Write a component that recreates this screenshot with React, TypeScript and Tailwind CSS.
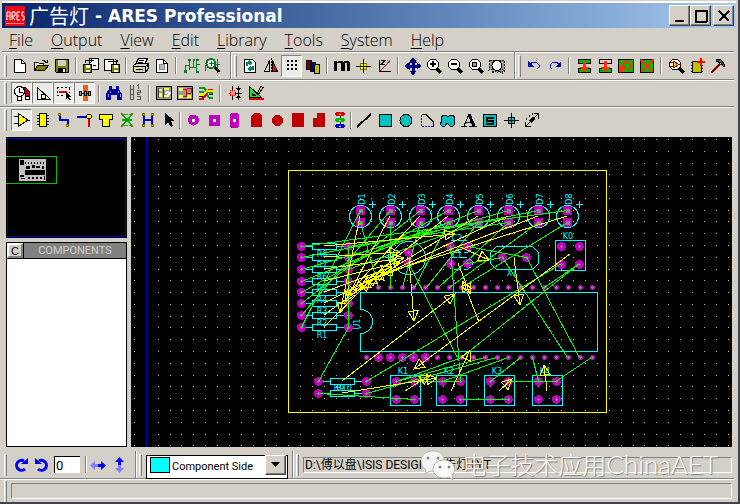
import type { ReactNode } from "react";

type Children = { children?: ReactNode };

/* ---------- drawing helpers ---------- */

function Glyph({ children }: Children) {
  return (
    <svg viewBox="0 0 20 20" className="h-5 w-5 shrink-0" fill="none" stroke="#000" shapeRendering="crispEdges" aria-hidden="true">
      {children}
    </svg>
  );
}

function Lens({ mark = "" }: { mark?: string }) {
  return (
    <g>
      <path d="M12 12l5 5" strokeWidth="3" />
      <circle cx="9" cy="8.500" r="5.500" fill="#fff" />
      <path d={mark} strokeWidth="2" />
    </g>
  );
}

const icons: Record<string, ReactNode> = {
  New: <><path d="M4.500 3.500h7l4 4v9h-11z" fill="#fff" /><path d="M11.500 3.500v4h4" /></>,
  Open: <><path d="M3.5 14V6.500h4l1 1h4v2" fill="#ffff80" /><path d="M3.500 14.500l3-5h11l-4 5z" fill="#808000" /><path d="M11 4.500h2l2 2M16.500 3.500v3h-3" /></>,
  Save: <><path d="M3.500 3.500h13v13h-12l-1-1z" fill="#808000" /><path d="M6 4h8v6H6z" fill="#d4d0c8" stroke="none" /><path d="M6 12h8v4H6z" fill="#000" stroke="none" /><path d="M11 13h2v3h-2z" fill="#fff" stroke="none" /></>,
  "Import region": <><path d="M8.500 2.500h9v11h-9z" fill="#fff" /><path d="M2.500 8.500h8v8h-8z" fill="#808000" /><path d="M5 9h4v3H5zM5 14h4v2H5z" fill="#fff" stroke="none" /><path d="M4.500 6.500v-2h6M9 2.500l3 2-3 2M12 9.500h3" /></>,
  "Export region": <><path d="M2.500 3.500h9v11h-9z" fill="#fff" /><path d="M9.500 8.500h8v8h-8z" fill="#808000" /><path d="M12 9h4v3h-4zM12 14h4v2h-4z" fill="#fff" stroke="none" /><path d="M6 5.500h9M13 3l3 2.500M14.500 6v3" /></>,
  Print: <><path d="M7.500 2.500h9l-3 6h-9z" fill="#fff" /><path d="M2.500 9.500l3-2h12v5l-3 4h-11l-1-2z" fill="#d4d0c8" /><path d="M3 10.500h11v5M5 13.500h7M8 4.500h5M7 6.500h5" /><path d="M5 12.500h3" stroke="#ff0" /><path d="M15.500 9l2 1" strokeWidth="2" /></>,
  "Set area": <><path d="M4.500 3.500h7l4 4v9h-11z" fill="#fff" /><path d="M7 8h5v5H7z" fill="#bbb" stroke="#888" /><path d="M11.500 3.500v4h4" /></>,
  Netlist: <g stroke="#007f1f"><path d="M4.500 15v-6h4v-5M8.500 8v6M8.500 11.500h7M15.500 4v12M12.500 4v7M15.500 8h3" /><path d="M3 14h3v3H3zM7 3h3v2H7zM12 3h2v2h-2zM15 3h3v2h-3zM15 15h3v2h-3z" fill="#007f1f" stroke="none" /></g>,
  "Search netlist": <><path d="M3.500 15v-6h4V4M15.500 3v12M12 8h6" stroke="#007f1f" /><path d="M12 10l5 6" strokeWidth="3" /><circle cx="9" cy="7.500" r="4.500" fill="#fff" stroke="#007f1f" strokeWidth="2" /><path d="M7 7.500h5M9.500 5v5" stroke="#007f1f" /></>,
  Redraw: <><path d="M4.500 3.500h8l3 3v10h-11z" fill="#fff" /><path d="M7 10V7h4M9 5l2 2-2 2M13 10v3h-4M11 11l-2 2 2 2" stroke="#008060" strokeWidth="1.500" /></>,
  Flip: <><path d="M8.500 4.500v11h-5z" fill="#d4d0c8" /><path d="M11.500 4.500v11h5z" fill="#f00" /><path d="M10 2v15" strokeDasharray="2 1" /></>,
  Grid: <path d="M5 5h2M9 5h2M13 5h2M5 9h2M9 9h2M13 9h2M5 13h2M9 13h2M13 13h2" strokeWidth="2" />,
  Layers: <><path d="M3.500 4.500h5v9h-5z" fill="#800000" /><path d="M7.500 6.500h5v9h-5z" fill="#000080" /><path d="M11.500 8.500h5v9h-5z" fill="#c0c000" /></>,
  Metric: <path d="M2 15V5h3v1l2-1h3l1 1 2-1h3l2 2v8h-3V7h-2v8H9V7H5v8z" fill="#000" stroke="none" />,
  Origin: <><path d="M7.500 7.500h6v6h-6z" fill="#ff0" stroke="#770" /><path d="M3 10.500h15M10.500 3v14" /></>,
  Polar: <><path d="M5.500 4v12M5 15.500h12M7 4.500h4l-4 4h4" /><path d="M6 15L16 5" stroke="#c00" /><path d="M13 4l3 3M16 4l-3 3" stroke="#777" /></>,
  Pan: <path d="M10 2l3 4h-2v3h3V7l4 3-4 3v-2h-3v4h2l-3 4-3-4h2v-4H6v2l-4-3 4-3v2h3V6H7z" fill="#0000b0" stroke="#000060" />,
  "Zoom in": <Lens mark="M6 8h6M9 5v6" />,
  "Zoom out": <Lens mark="M6 8h6" />,
  "Zoom all": <><Lens /><path d="M6.500 6.500h4v4h-4z" fill="#999" /></>,
  "Zoom area": <><path d="M3 4h14v11l-2-2v4l-3-2-2 2-2-2-3 2v-4l-3 1z" fill="#999" stroke="#222" strokeDasharray="2 1" /><circle cx="10" cy="9.500" r="5" fill="#fff" /></>,
  Undo: <g stroke="#0000b0"><path d="M6 8l3-2h3l3 3v2l-2 2" /><path d="M4 5v6h6z" fill="#0000b0" stroke="none" /></g>,
  Redo: <g stroke="#0000b0"><path d="M14 8l-3-2H8L5 9v2l2 2" /><path d="M16 5v6h-6z" fill="#0000b0" stroke="none" /></g>,
  "Block copy": <><path d="M4.500 3.500h12v4h-12zM4.500 12.500h12v4h-12z" fill="#0b0" /><path d="M9 5h3v6h3l-4.500 5L6 11h3z" fill="#ff3010" stroke="none" /></>,
  "Block move": <><path d="M4.500 3.500h12v4h-12z" /><path d="M4.500 12.500h12v4h-12z" fill="#0b0" /><path d="M9 5h3v6h3l-4.500 5L6 11h3z" fill="#ff3010" stroke="none" /></>,
  "Block rotate": <><path d="M2.500 3.500h15v13h-15z" fill="#0b0" /><path d="M7 11V8l2-2h3l2 2v4l-3 3" stroke="#ff3010" strokeWidth="2" /><path d="M4 10h6v2l-4 4H4z" fill="#ff3010" stroke="none" /></>,
  "Block delete": <><path d="M3.500 3.500h13v13h-13z" fill="#0b0" /><path d="M4 4l12 12M16 4L4 16" stroke="#ff3010" strokeWidth="2" /></>,
  "Pick parts": <><path d="M13 12l5 5" strokeWidth="3" /><circle cx="9" cy="8.500" r="5.500" fill="#fff" /><path d="M7 5l6 3.500-6 3.500z" fill="#cc0" stroke="#900" /><path d="M3 6.500h4M3 10.500h4M13 8.500h2" stroke="#900" /></>,
  "Make package": <><path d="M4 6.500h12M4 9.500h12M4 12.500h12M4 15.500h12" /><path d="M5.500 5.500h9v11h-9z" fill="#c0c000" /><path d="M10 6h8M14 2v8" stroke="#f00" strokeWidth="2" /></>,
  Decompose: <><path d="M3 17L12 8" stroke="#800000" strokeWidth="2" /><path d="M8 3l5 1 4 5-1 2-3-4-5-2z" fill="#606000" /></>,

  "Trace angle lock": <><path d="M4 12V7l3-3h6l4 4v8h-4v-6l-2-2" fill="#c00010" /><path d="M13.500 13.500h4v3h-4z" fill="#fff" /><circle cx="7.500" cy="8.500" r="5" fill="#fff" /><path d="M7.500 5v4h3" /><path d="M5 14v3h4v-3" fill="#fff" /></>,
  "Auto neck": <><path d="M4.500 4v12M4 16.500h14M5 5l12 11" /><path d="M8.500 11.500h4v4h-4z" fill="#ff8" /></>,
  "Auto trace": <><path d="M3 4.500h13M3 12.500h8M3.500 4v9M15.500 5v5" strokeDasharray="2 2" /><path d="M5 8.500h8" stroke="#e00" strokeWidth="2" /><path d="M12 9l6 5-3 0 2 3-2 0-1-2-2 1z" fill="#000" stroke="none" /></>,
  "Auto track": <><path d="M8 2h5v16H8z" fill="#f06010" stroke="none" /><path d="M4 10.500h12" /><path d="M4.500 8.500h2v4h-2zM13.500 8.500h2v4h-2zM9.500 8.500h2v4h-2z" fill="#999" /></>,
  Find: <><path d="M5 3h3v3h4V3h3v3l3 5v6h-5v-5H7v5H2v-6l3-5z" fill="#0000a0" stroke="none" /><path d="M4 11v3M6 8v2M14 8v2M16 11v3" stroke="#99f" /></>,
  "Auto annotate": <path d="M5.500 2v4h3V2M5.500 7v4h3V7M5.500 12v4h3v-4M13.500 1v5M12 2.500h1M12 7.500h3v2h-3v2h3M12 13.500h3v3h-3" stroke="#555" />,
  "Auto placer": <><path d="M2.500 3.500h15v13h-15z" fill="#999" /><path d="M5 6h3v2H5zM5 10h3v4H5zM10 5h5v2h-5zM10 12h5v2h-5z" fill="#ff4" stroke="none" /><path d="M4.500 5v10M9.500 5v10" stroke="#333" /><path d="M11 10l3-1 2 1-3 3" stroke="#fff" strokeWidth="2" /></>,
  "Auto router": <><path d="M2.500 3.500h15v13h-15z" fill="#999" /><path d="M4 5h4v3H4zM12 12h4v3h-4zM4 12h4v3H4z" fill="#ff4" stroke="none" /><path d="M8 6.500h3v4h5M8 13.500h3v-3M12 5.500h4v4" stroke="#d00" /></>,
  "Design rules": <><path d="M3 4.500h4l6 5h4M3 8.500h5l5 6h4" stroke="#00a020" strokeWidth="2" /><path d="M3 15.500h4l6-9h4" stroke="#d00" strokeWidth="2" /><path d="M3 11.500h4l5-4h5" stroke="#ee0" strokeWidth="2" /><path d="M3 13.500h4M13 11.500h4" /></>,
  "Connectivity check": <><path d="M7.500 3v14M13.500 3v14M4 10.500h13" /><path d="M5 7.500h5v5H5z" fill="#f88" stroke="#d00" strokeDasharray="1 1" /><path d="M11 5h5l-2.500 3zM11 15h5l-2.500-3z" fill="#000" stroke="none" /></>,
  "3D view": <><path d="M3.500 3.500v11h12z" fill="#2d2" /><path d="M6.500 10.500v2h3z" fill="#fff" /><path d="M3 16h15" stroke="#d00" strokeWidth="2" /><path d="M11 10.500l4-7 2 1-4 6z" fill="#ee0" /></>,

  Component: <><path d="M6.500 3.500L16 10 6.500 16.500z" fill="#ff0" /><path d="M2 6.500h4M2 13.500h4M16 10.500h2" /></>,
  Package: <><path d="M4 5.500h12M4 8.500h12M4 11.500h12M4 14.500h12" /><path d="M6.500 3.500h7v13h-7z" fill="#ff0" /></>,
  Track: <><path d="M5.500 5v5h8v5" stroke="#0000c0" strokeWidth="2" /><path d="M4.500 3.500h2v2h-2zM12.500 14.500h2v2h-2z" fill="#ff0" stroke="#770" /></>,
  Via: <><path d="M2 7h10" stroke="#0000b0" strokeWidth="2" /><path d="M14 9v8" stroke="#d00" strokeWidth="2" /><circle cx="14" cy="6.500" r="2.500" fill="#ff0" /></>,
  Zone: <path d="M3.500 4.500h13v5h-3v7h-7v-7h-3z" fill="#ff0" />,
  Ratsnest: <><path d="M6 5l8 10M14 5L6 15M5 10h10" stroke="#0a0" strokeWidth="1.500" /><path d="M6 4.500h8M6 15.500h8" stroke="#0a0" strokeDasharray="2 1" /><path d="M4 3h2v2H4zM14 3h2v2h-2zM4 15h2v2H4zM14 15h2v2h-2z" fill="#770" stroke="none" /></>,
  Connectivity: <><path d="M6 5v10M14 5v10M6 10h8" stroke="#0000b0" strokeWidth="2" /><path d="M4.500 3.500h2v2h-2zM13.500 3.500h2v2h-2zM4.500 14.500h2v2h-2zM13.500 14.500h2v2h-2z" fill="#ff0" stroke="#770" /></>,
  Select: <path d="M6 3v12l3-3 3 5 2-1-2-5h4z" fill="#000" stroke="none" />,
  "Round pad": <><circle cx="10.500" cy="10" r="5.500" fill="#c000c0" stroke="none" /><path d="M9 9h3v3H9z" fill="#fff" stroke="none" /></>,
  "Square pad": <><path d="M5 5h11v11H5z" fill="#c000c0" stroke="none" /><path d="M9 9h3v3H9z" fill="#fff" stroke="none" /></>,
  "DIL pad": <><rect x="5" y="3" width="9" height="15" rx="3" fill="#c000c0" stroke="none" /><path d="M8 9h3v3H8z" fill="#fff" stroke="none" /></>,
  "Edge pad": <path d="M5 17V6l3-3h5l3 3v11z" fill="#c00000" stroke="none" />,
  "Circular SMT": <circle cx="10.500" cy="10.500" r="5.500" fill="#c00000" stroke="none" />,
  "Rectangular SMT": <path d="M4 3h12v14H4z" fill="#c00000" stroke="none" />,
  "Polygon SMT": <path d="M4 8h4V3h8v14H4z" fill="#c00000" stroke="none" />,
  Padstack: <><path d="M10 3v14" /><ellipse cx="10" cy="4" rx="5" ry="2" fill="#d00" stroke="none" /><ellipse cx="10" cy="10" rx="5" ry="2" fill="#0b0" stroke="none" /><ellipse cx="10" cy="16" rx="5" ry="2" fill="#00c" stroke="none" /><path d="M9 4.500h2M9 10.500h2M9 16.500h2" stroke="#fff" /></>,
  Line: <path d="M3 17L17 4" strokeWidth="2" />,
  Box: <path d="M4.500 4.500h12v12h-12z" fill="#00c0c0" />,
  Circle: <circle cx="10" cy="10.500" r="6" fill="#00c0c0" />,
  Arc: <><path d="M5 4.500h4l7 7v5" /><path d="M4.500 5v11.500H16" stroke="#0000b0" strokeDasharray="2 1" /></>,
  Path: <path d="M3 8l2-3h3l2 2 2-2h3l2 3-1 3 1 3-2 2h-3l-3-3-2 3H4l-2-2 2-3z" fill="#00c0c0" />,
  Text: <><path d="M2 16.500h6M10 16.500h8M5 16L10 4M7 12.500h6" /><path d="M10 4l5 12" strokeWidth="3" /></>,
  Symbol: <><path d="M3.500 4.500h13v12h-13z" fill="#00c0c0" /><path d="M14 7.500H7v3h6v3H6" strokeWidth="2" /></>,
  Marker: <><path d="M7.500 7.500h6v6h-6z" fill="#00c0c0" /><path d="M3 10.500h15M10.500 3v15" /></>,
  Dimension: <><path d="M3 17L17 3M3.500 12v4.500h5M12 3.500h4.500v5" /><path d="M8 12l4-4" strokeWidth="3" /><path d="M4 9h1M7 6h1M10 4h1" strokeWidth="2" /></>,
};

function Tool({ name, on = false }: { name: string; on?: boolean }) {
  const face = on ? "border border-t-[#808080] border-l-[#808080] border-r-white border-b-white bg-[#ecebe7]" : "";
  return (
    <button type="button" title={name} aria-label={name} aria-pressed={on} className={`flex h-[22px] w-[21px] shrink-0 items-center justify-center ${face}`}>
      <Glyph>{icons[name]}</Glyph>
    </button>
  );
}

function Tools({ names, on = [] }: { names: string[]; on?: string[] }) {
  return (
    <div className="flex shrink-0">
      {names.map((n) => <Tool key={n} name={n} on={on.includes(n)} />)}
    </div>
  );
}

const Grip = () => <span className="h-[22px] w-[3px] shrink-0 border-t border-r border-l border-t-white border-l-white border-r-[#808080]" />;
const Sep = () => <span className="h-[17px] w-[2px] shrink-0 border-l border-l-[#808080] bg-white" />;
const BandEdge = () => <span className="w-[2px] shrink-0 self-stretch border-l border-l-[#808080] bg-white" />;

function Gap({ children }: Children) {
  return <span className="flex w-2 shrink-0 items-center justify-center">{children}</span>;
}

const row = "flex shrink-0 items-center border-t border-t-[#808080] shadow-[inset_0_1px_0_#fff] pl-1";

/* ---------- circuit board ---------- */

const MAGENTA = "#c000c0";
const CYAN = "#00ffff";
const ledX = [360, 390, 420, 448, 478, 508, 538, 567];
const resistorY = [246, 257, 269, 281, 292, 303, 315, 327];
const pinX = Array.from({ length: 20 }, (_, i) => Math.round(366 + i * 11.87));
const switches: [string, number, number][] = [["K1", 390, 375], ["K2", 436, 375], ["K3", 484, 375], ["K4", 532, 375], ["K0", 555, 240]];

const nets = [
  [348, 246, 348, 327], [348, 327, 318, 381], [318, 393, 414, 399], [366, 381, 561, 263], [579, 263, 461, 357],
  [460, 381, 450, 246], [502, 257, 567, 357], [526, 257, 579, 357], [408, 263, 457, 357], [532, 357, 538, 381],
  [591, 357, 555, 381], [508, 381, 555, 381], [460, 399, 508, 399], [520, 357, 490, 381], [508, 357, 442, 381],
  [496, 357, 366, 393], [461, 357, 396, 381], [484, 357, 396, 381], [414, 381, 460, 381], [467, 246, 526, 257], [467, 263, 502, 257],
  [301, 246, 567, 210], [301, 257, 538, 210], [301, 269, 508, 210], [301, 281, 478, 210], [301, 292, 448, 210],
  [301, 303, 420, 210], [301, 315, 390, 210], [301, 327, 360, 210], [360, 222, 378, 287], [390, 222, 390, 287],
  [420, 222, 402, 287], [448, 222, 414, 287], [478, 222, 426, 287], [508, 222, 438, 287], [538, 222, 449, 287],
  [567, 222, 461, 287], [348, 257, 448, 222], [348, 246, 508, 222], [348, 269, 478, 222], [579, 263, 544, 287],
];

const vectors = [
  [360, 216, 340, 313], [390, 216, 345, 302], [420, 216, 346, 296], [448, 216, 354, 291], [478, 216, 360, 288],
  [508, 216, 366, 283], [538, 216, 373, 279], [567, 216, 382, 274], [324, 246, 455, 234], [324, 257, 400, 252],
  [324, 269, 404, 258], [324, 281, 400, 262], [324, 292, 392, 267], [324, 303, 386, 272], [324, 315, 378, 276],
  [324, 327, 370, 281], [409, 258, 414, 321], [514, 258, 520, 305], [570, 254, 414, 369], [479, 322, 463, 281],
  [458, 263, 470, 294], [458, 246, 489, 260], [342, 381, 455, 294], [342, 393, 437, 378], [405, 391, 430, 375],
  [451, 391, 470, 350], [499, 391, 512, 379], [547, 391, 544, 365],
];

function arrowHead([x1, y1, x2, y2]: number[]) {
  const len = Math.hypot(x2 - x1, y2 - y1);
  const ux = (x2 - x1) / len;
  const uy = (y2 - y1) / len;
  const bx = x2 - ux * 10;
  const by = y2 - uy * 10;
  return `M${x2} ${y2}L${bx - uy * 5} ${by + ux * 5}L${bx + uy * 5} ${by - ux * 5}Z`;
}

function dots() {
  let d = "";
  for (let i = 0; i < 160; i++) {
    if (i === 1) continue;
    for (let j = 0; j < 90; j++) d += `M${134 + Math.round(i * 11.87)} ${139 + Math.round(j * 11.78)}h1v1h-1z`;
  }
  return d;
}
const dotPath = dots();

function Pad({ x, y, r = 4 }: { x: number; y: number; r?: number }) {
  return (
    <>
      <circle cx={x + 0.5} cy={y + 0.5} r={r + 0.5} fill={MAGENTA} />
      <path d={`M${x - 1} ${y}h3v1h-3zM${x} ${y - 1}h1v3h-1z`} fill="#888" />
    </>
  );
}

const labelFont = "font-['DejaVu_Sans',Verdana,sans-serif] text-[8px]";

function Label({ x, y, children, up = false }: { x: number; y: number; up?: boolean; children: string }) {
  return (
    <text x={x} y={y} textAnchor="middle" fill={CYAN} className={labelFont} transform={up ? `rotate(-90 ${x} ${y})` : undefined}>
      {children}
    </text>
  );
}

function Board() {
  return (
    <svg className="absolute inset-0 h-full w-full" shapeRendering="crispEdges" role="img" aria-label="PCB layout">
      <g transform="translate(-131 -137)">
        <path d={dotPath} fill="#bdbdbd" />
        <path d="M146 137h1v2000h-1z" fill="#0000c8" />
        <rect x="288.5" y="170.5" width="318" height="242" fill="none" stroke="#ff0" />

        <g fill="none" stroke={CYAN}>
          {ledX.map((x) => (
            <path key={x} d={`M${x - 10.5} 216.500a11 11 0 0 0 22 0a11 11 0 0 0 -22 0M${x + 9} 204.500h7M${x + 12.5} 201v7`} />
          ))}
          {resistorY.map((y) => (
            <path key={y} d={`M305 ${y + 0.5}h7M337 ${y + 0.5}h8M312.500 ${y - 2.5}h24v6h-24z`} />
          ))}
          {[381, 393].map((y) => (
            <path key={y} d={`M322 ${y + 0.5}h8M355 ${y + 0.5}h8M330.500 ${y - 2.5}h24v6h-24z`} />
          ))}
          {switches.map(([n, x, y]) => <rect key={n} x={x + 0.5} y={y + 0.5} width="30" height="30" />)}
          <path d="M360.500 292.500h237v59h-237v-18a12 12 0 0 0 0 -24z" />
          <circle cx="409" cy="258" r="16.500" />
          <path d="M385 257.500h7M388.500 254v7" />
          <path d="M496.500 246.500h36l6 6v11l-6 6h-36l-6-6v-11z" />
          <path d="M447 249v-5l4-4h16l5 4v5l-4 3h-16zM447 266v-5l4-4h16l5 4v5l-4 3h-16z" strokeDasharray="7 3" />
        </g>

        {ledX.map((x) => (
          <g key={x}>
            <path d={`M${x - 4} 206h9v9h-9zM${x - 4} 218h9v9h-9z`} fill={MAGENTA} />
            <path d={`M${x - 1} 209h4v4h-4zM${x - 1} 221h4v4h-4z`} fill="#888" />
          </g>
        ))}
        {resistorY.map((y) => <g key={y}><Pad x={301} y={y} /><Pad x={348} y={y} /></g>)}
        {[381, 393].map((y) => <g key={y}><Pad x={318} y={y} /><Pad x={366} y={y} /></g>)}
        {switches.map(([n, x, y]) => (
          <g key={n}>
            <Pad x={x + 6} y={y + 6} /><Pad x={x + 24} y={y + 6} />
            <Pad x={x + 6} y={y + 24} /><Pad x={x + 24} y={y + 24} />
          </g>
        ))}
        {pinX.map((x, i) => (
          <g key={x}>
            <Pad x={x} y={287} r={2} />
            <Pad x={x} y={357} r={i > 0 && i < 6 ? 4 : 2} />
          </g>
        ))}
        <Pad x={408} y={252} /><Pad x={408} y={263} />
        <Pad x={502} y={257} /><Pad x={526} y={257} />
        <Pad x={450} y={246} /><Pad x={467} y={246} /><Pad x={450} y={263} /><Pad x={467} y={263} />

        {ledX.map((x, i) => <Label key={x} x={x + 5} y={199} up>{`D${i + 1}`}</Label>)}
        {resistorY.map((y, i) => <Label key={y} x={322} y={y + 11}>{`R${8 - i}`}</Label>)}
        {switches.map(([n, x, y]) => <Label key={n} x={x + 13} y={y - 1}>{n}</Label>)}
        <Label x={344} y={391}>R10</Label>
        <Label x={339} y={391}>R9</Label>
        <Label x={512} y={276}>X1</Label>
        <Label x={457} y={258}>C1</Label>
        <Label x={457} y={241}>C2</Label>
        <Label x={360} y={324} up>U1</Label>

        <path d={nets.map(([a, b, c, d]) => `M${a + 0.5} ${b + 0.5}L${c + 0.5} ${d + 0.5}`).join("")} stroke="#0f0" fill="none" />
        <path d={vectors.map((v) => `M${v[0]} ${v[1]}L${v[2]} ${v[3]}${arrowHead(v)}`).join("")} stroke="#ff0" fill="none" />
      </g>
    </svg>
  );
}

function Overview() {
  return (
    <svg className="block h-[101px] w-full bg-black" shapeRendering="crispEdges" role="img" aria-label="Overview">
      <rect x="1.500" y="1.500" width="118" height="98" fill="none" stroke="#0000c8" />
      <path d="M0 19.500h50.500v27H0" fill="none" stroke="#00c000" />
      <path d="M13 22h27v22H13z" fill="#c0c0c0" />
      <path d="M14 23h4v5h-4zM19 33h20v5H19zM14 38h4v2h-4zM19 25h1v2h-1zM22 25h1v2h-1zM25 25h1v2h-1zM28 25h1v2h-1zM31 25h1v2h-1zM34 25h1v2h-1zM37 25h1v2h-1zM20 29h4v3h-4zM26 28h3v3h-3zM30 29h4v2h-4zM36 29h2v3h-2zM15 41h4v1h-4zM22 40h2v2h-2zM26 40h2v2h-2zM30 40h2v2h-2zM34 40h2v2h-2zM38 39h1v4h-1z" fill="#000" />
    </svg>
  );
}

/* ---------- window ---------- */

const raised = "border border-t-white border-l-white border-r-[#404040] border-b-[#404040] bg-[#d4d0c8] shadow-[inset_-1px_-1px_0_#808080]";

function Caption({ name, d }: { name: string; d: string }) {
  return (
    <button type="button" aria-label={name} className={`flex h-[21px] w-[21px] items-center justify-center ${raised}`}>
      <svg viewBox="0 0 20 20" className="h-5 w-5 shrink-0" fill="none" stroke="#000" strokeWidth="2" shapeRendering="crispEdges"><path d={d} /></svg>
    </button>
  );
}

function Turn({ name, flip }: { name: string; flip?: boolean }) {
  return (
    <button type="button" aria-label={name} className="flex w-[21px] shrink-0 justify-center">
      <svg viewBox="0 0 20 20" className={flip ? "h-5 w-5 -scale-x-100" : "h-5 w-5"} fill="none">
        <path d="M13 6A5 5 0 1 0 14 14" stroke="#0000f0" strokeWidth="3" />
        <path d="M10 9h7V3z" fill="#0000f0" />
      </svg>
    </button>
  );
}

function Mirror({ name, upright }: { name: string; upright?: boolean }) {
  return (
    <button type="button" aria-label={name} className="flex w-[21px] shrink-0 justify-center">
      <svg viewBox="0 0 20 20" className={upright ? "h-5 w-5 -rotate-90" : "h-5 w-5"}>
        <path d="M10 9v3H7v3L2 10.500 7 6v3z" fill="#8080ff" />
        <path d="M10 9v3h3v3l5-4.500L13 6v3z" fill="#0000f0" />
      </svg>
    </button>
  );
}

const menus = ["File", "Output", "View", "Edit", "Library", "Tools", "System", "Help"];

export default function App() {
  return (
    <div className="relative flex min-h-screen flex-col border-r-2 border-b-2 border-[#404448] bg-[#d4d0c8] font-['Liberation_Sans',Arial,'Noto_Sans_CJK_SC',sans-serif] text-black">
      <header className="mt-[3px] mr-[2px] ml-[2px] flex h-[25px] shrink-0 items-center bg-linear-to-r from-[#0a246a] to-[#a6caf0] pr-[2px] pl-[3px] shadow-[0_-2px_0_#fff]">
        <svg viewBox="0 0 20 20" className="h-5 w-5 shrink-0" aria-hidden="true">
          <path d="M0 0h20v20H0z" fill="#e80c18" />
          <path d="M2 14V6h3v8M2 10h3M7 14V6h3v4H7l3 4M15 6h-3v8h3M12 10h2M19 6h-2v4h2v4h-2" fill="none" stroke="#fff" />
          <path d="M1 17.500h18" stroke="#ff8080" />
        </svg>
        <h1 className="ml-1 flex flex-1 items-center gap-[6px] font-['DejaVu_Sans','Noto_Sans_CJK_SC',sans-serif] text-[17px] leading-6 font-bold whitespace-nowrap text-white">
          <span className="font-['Noto_Sans_CJK_SC',sans-serif] text-[20px] font-normal">广告灯</span>
          <span>- ARES Professional</span>
        </h1>
        <div className="flex">
          <Caption name="Minimize" d="M5 15h9" />
          <Caption name="Maximize" d="M4 5h12M4.500 4v12M15.500 4v12M4 15.500h12" />
          <span className="w-[2px]" />
          <Caption name="Close" d="M5 5l10 10M15 5L5 15" />
        </div>
      </header>

      <nav className="flex h-[23px] shrink-0 items-center gap-[18px] pl-[9px]">
        {menus.map((m) => (
          <button key={m} type="button" className="font-['Open_Sans','Noto_Sans',sans-serif] text-[16px] leading-5 font-light">
            <span className="underline underline-offset-2">{m[0]}</span>{m.slice(1)}
          </button>
        ))}
      </nav>

      <div className={`${row} mr-1 ml-[2px] h-7`}>
        <div className="-ml-[2px] flex w-[226px] shrink-0 items-center">
          <Grip />
          <span className="w-[2px]" />
          <Tools names={["New", "Open", "Save"]} />
          <Gap><Sep /></Gap>
          <Tools names={["Import region", "Export region"]} />
          <Gap><Sep /></Gap>
          <Tools names={["Print", "Set area"]} />
          <Gap><Sep /></Gap>
          <Tools names={["Netlist", "Search netlist"]} />
        </div>
        <BandEdge />
        <div className="flex w-[282px] shrink-0 items-center pl-[2px]">
          <Grip />
          <span className="w-[2px]" />
          <Tools names={["Redraw", "Flip", "Grid", "Layers"]} on={["Grid"]} />
          <Gap><Sep /></Gap>
          <Tools names={["Metric", "Origin", "Polar"]} />
          <Gap><Sep /></Gap>
          <Tools names={["Pan", "Zoom in", "Zoom out", "Zoom all", "Zoom area"]} />
        </div>
        <BandEdge />
        <div className="flex shrink-0 items-center pl-[2px]">
          <Grip />
          <span className="w-[2px]" />
          <Tools names={["Undo", "Redo"]} />
          <Gap><Sep /></Gap>
          <Tools names={["Block copy", "Block move", "Block rotate", "Block delete"]} />
          <Gap><Sep /></Gap>
          <Tools names={["Pick parts", "Make package", "Decompose"]} />
        </div>
      </div>

      <div className={`${row} mr-1 h-[27px]`}>
        <Grip />
        <span className="w-1" />
        <Tools names={["Trace angle lock", "Auto neck", "Auto trace", "Auto track"]} on={["Trace angle lock", "Auto neck", "Auto trace", "Auto track"]} />
        <Gap><Sep /></Gap>
        <Tools names={["Find", "Auto annotate"]} />
        <Gap><Sep /></Gap>
        <Tools names={["Auto placer", "Auto router", "Design rules"]} />
        <Gap><Sep /></Gap>
        <Tools names={["Connectivity check", "3D view"]} />
      </div>

      <div className={`${row} mr-1 h-[27px]`}>
        <Grip />
        <span className="w-1" />
        <Tools names={["Component", "Package", "Track", "Via", "Zone", "Ratsnest", "Connectivity", "Select"]} on={["Component"]} />
        <span className="flex w-[3px]"><Sep /></span>
        <Tools names={["Round pad", "Square pad", "DIL pad", "Edge pad", "Circular SMT", "Rectangular SMT", "Polygon SMT", "Padstack"]} />
        <span className="flex w-[3px]"><Sep /></span>
        <Tools names={["Line", "Box", "Circle", "Arc", "Path", "Text", "Symbol", "Marker", "Dimension"]} />
      </div>

      <main className="flex flex-1 gap-1 pt-1 pr-[6px] pl-[6px]">
        <aside className="flex w-[121px] shrink-0 flex-col">
          <Overview />
          <section className="mt-1 flex flex-1 flex-col border border-black bg-white">
            <div className="flex h-4 items-stretch border-b border-black bg-[#808080]">
              <button type="button" className="w-4 border-2 border-t-white border-r-[#808080] border-b-[#808080] border-l-white bg-[#d4d0c8] text-[11px] leading-3">C</button>
              <h2 className="flex-1 border-l border-black text-center font-['Roboto',Arial,sans-serif] text-[11px] leading-[15px] text-[#d4d0c8]">COMPONENTS</h2>
            </div>
          </section>
        </aside>
        <section className="relative min-h-[300px] flex-1 overflow-hidden bg-black">
          <Board />
        </section>
      </main>

      <footer className="relative shrink-0">
        <div className="mr-1 flex h-8 items-center border-b border-[#808080] pt-1 pl-1">
          <Grip />
          <span className="w-[3px]" />
          <Turn name="Rotate clockwise" />
          <Turn name="Rotate anticlockwise" flip />
          <input aria-label="Angle" defaultValue="0" className="ml-[2px] h-[17px] w-[26px] border-t border-l border-black bg-white px-px font-['Roboto',Arial,sans-serif] text-[13px] leading-4 outline-none" />
          <span className="flex w-[7px] justify-end"><Sep /></span>
          <Mirror name="Mirror horizontally" />
          <Mirror name="Mirror vertically" upright />
          <span className="w-[6px]" />
          <BandEdge />
          <span className="w-[2px]" />
          <Grip />
          <div className="relative ml-1 h-6 w-[142px] shrink-0">
            <select aria-label="Layer" className="h-full w-full appearance-none border border-black bg-white pl-[25px] font-['Roboto',Arial,sans-serif] text-[11px] outline-none">
              <option>Component Side</option>
            </select>
            <span className="pointer-events-none absolute top-1 left-1 h-4 w-5 border border-black bg-[#00ffff]" />
            <span className={`pointer-events-none absolute top-[2px] right-[2px] flex h-5 w-[21px] items-center justify-center ${raised}`}>
              <svg viewBox="0 0 9 5" className="h-[5px] w-[9px]"><path d="M0 0h9L4.500 5z" /></svg>
            </span>
          </div>
          <span className="w-1" />
          <BandEdge />
          <span className="w-[2px]" />
          <Grip />
          <output className="mr-[2px] ml-1 h-4 flex-1 truncate border border-t-[#808080] border-r-white border-b-white border-l-[#808080] pl-px font-['Roboto','Noto_Sans_CJK_SC',sans-serif] text-xs leading-[14px]">
            D:\傅以盘\ISIS DESIGN\广告灯.LYT
          </output>
        </div>
        <div className="mr-1 flex h-[23px] items-center border-t border-white pl-1">
          <Grip />
          <span className="mr-[2px] ml-1 h-4 flex-1 border border-t-[#808080] border-r-white border-b-white border-l-[#808080]" />
        </div>

        <div className="pointer-events-none absolute top-0 right-[20px] flex items-center gap-[6px]">
          <svg viewBox="0 0 36 34" className="h-[34px] w-9" aria-hidden="true">
            <path d="M13 4C5 4 1 9 1 14c0 4 2 7 5 9l-1 4 5-3c8 1 14-3 14-10S20 4 13 4z" fill="#f4f4f2" stroke="#aaa" strokeWidth=".7" />
            <path d="M24 13c-6 0-11 4-11 9s5 9 11 9c2 0 3 0 5-1l4 3-1-5c6-6 1-15-8-15z" fill="#fafaf8" stroke="#999" strokeWidth=".7" />
            <g fill="#888"><circle cx="8" cy="11" r="1.500" /><circle cx="18" cy="11" r="1.500" /><circle cx="20" cy="20" r="1.500" /><circle cx="29" cy="20" r="1.500" /></g>
          </svg>
          <span className="font-['Noto_Sans_CJK_SC',sans-serif] text-[24px] leading-8 font-light whitespace-nowrap text-white [text-shadow:1px_1px_1px_#777]">
            电子技术应用<span className="font-['Lato','Noto_Sans_CJK_SC',sans-serif] text-[26px]">ChinaAET</span>
          </span>
        </div>
      </footer>
    </div>
  );
}
